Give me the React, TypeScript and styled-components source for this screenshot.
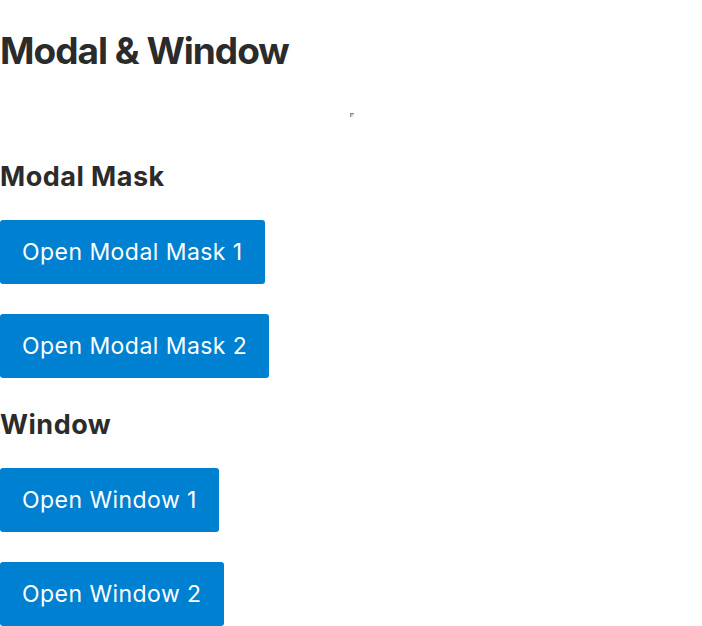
import React from "react";
import styled, { createGlobalStyle } from "styled-components";

const Global = createGlobalStyle`
  html, body { margin: 0; padding: 0; background: #ffffff; }
  body { font-family: Inter, "Noto Sans", "Liberation Sans", sans-serif; color: #2b2b2b; }
`;

const Page = styled.main`
  display: flex;
  flex-direction: column;
  align-items: flex-start;
  padding: 0;
`;

const Title = styled.h1`
  margin: 29px 0 0;
  font-size: 37px;
  line-height: 44px;
  font-weight: 700;
  letter-spacing: -1px;
`;

const MarkerRow = styled.div`
  align-self: stretch;
  display: flex;
  justify-content: center;
  padding: 40px 0 0 2px;
  height: 87px;
  box-sizing: border-box;
`;

const Marker = styled.span`
  display: block;
  width: 4px;
  height: 4px;
  border-top: 1px solid #8a8a8a;
  border-left: 1px solid #8a8a8a;
  background: linear-gradient(135deg, #b0b0b0 0%, #e8e8e8 60%, #ffffff 100%);
  box-sizing: border-box;
`;

const Section = styled.section`
  display: flex;
  flex-direction: column;
  align-items: flex-start;
`;

const Heading = styled.h3`
  margin: 0 0 27px;
  font-size: 27px;
  line-height: 33px;
  font-weight: 700;
  letter-spacing: 0.5px;
`;

const Button = styled.button`
  display: inline-flex;
  align-items: center;
  height: 64px;
  padding: 0 22px;
  margin: 0 0 30px;
  border: none;
  border-radius: 3px;
  background: #0080d0;
  color: #ffffff;
  font-family: inherit;
  font-size: 23px;
  font-weight: 400;
  letter-spacing: 0.45px;
  cursor: pointer;
`;

export default function App() {
  return (
    <>
      <Global />
      <Page>
        <Title>Modal &amp; Window</Title>
        <MarkerRow>
          <Marker />
        </MarkerRow>
        <Section>
          <Heading>Modal Mask</Heading>
          <Button>Open Modal Mask 1</Button>
          <Button>Open Modal Mask 2</Button>
        </Section>
        <Section>
          <Heading>Window</Heading>
          <Button>Open Window 1</Button>
          <Button>Open Window 2</Button>
        </Section>
      </Page>
    </>
  );
}
